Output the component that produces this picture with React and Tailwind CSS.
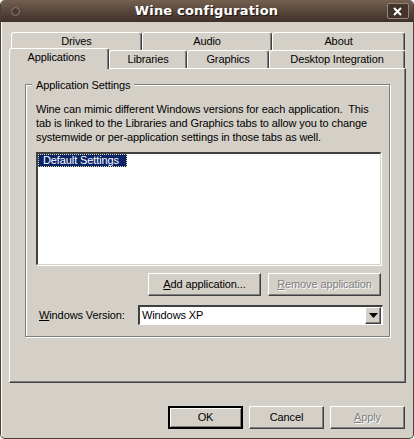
// Wine configuration dialog, Applications tab
const font = "font-['Liberation_Sans',sans-serif] text-[11px] tracking-[-0.11px] text-black";

function Tab({ label, className, selected }) {
  return (
    <div
      className={`flex items-center justify-center rounded-t-[3px] border-t border-l border-r border-t-white border-l-white border-r-[#404040] shadow-[inset_-1px_0_0_#808080] ${
        selected ? "relative z-10 h-[21px] -mt-[2px] -mb-[1px] pb-[3px] bg-[#d4d0c8]" : "h-[18px]"
      } ${className}`}
    >
      {label}
    </div>
  );
}

function Button({ children, className, disabled, isDefault }) {
  const bevel = isDefault
    ? "border-2 border-black shadow-[inset_1px_1px_0_#fff,inset_-1px_-1px_0_#808080]"
    : "border border-t-white border-l-white border-r-[#404040] border-b-[#404040] shadow-[inset_-1px_-1px_0_#808080]";
  return (
    <div
      className={`flex shrink-0 items-center justify-center whitespace-nowrap bg-[#d4d0c8] ${bevel} ${className} ${
        disabled ? "text-[#808080] [text-shadow:1px_1px_0_#fff]" : ""
      }`}
    >
      {children}
    </div>
  );
}

export default function App() {
  return (
    <div className={`flex h-[439px] w-[414px] flex-col overflow-hidden rounded-b-[5px] rounded-t-[5px] border-l border-r border-b border-[#4a4038] bg-[#d4d0c8] ${font}`}>
      {/* title bar */}
      <div className="flex h-[22px] shrink-0 items-center justify-between bg-gradient-to-b from-[#75604f] to-[#3f3029] pl-[10px] pr-[4px]">
        <div className="h-[9px] w-[9px] rounded-full border border-[#8a7c72] bg-[#4c3d34]"></div>
        <div className="ml-[6px] font-['DejaVu_Sans',sans-serif] text-[13px] font-bold tracking-[0.2px] text-white [text-shadow:1px_1px_1px_#1c1410]">
          Wine configuration
        </div>
        <div className="flex h-[16px] w-[22px] items-center justify-center rounded-[2px] border border-[#93857a] bg-[#42332b]">
          <svg width="9" height="9" viewBox="0 0 9 9">
            <path d="M1 1 L8 8 M8 1 L1 8" stroke="#fff" strokeWidth="2" />
          </svg>
        </div>
      </div>

      <div className="flex flex-1 flex-col border-l border-white pl-[7px] pr-[7px] pt-[10px]">
        {/* tabs */}
        <div className="flex pl-[2px] pr-[1px]">
          <Tab label="Drives" className="w-[131px]" />
          <Tab label="Audio" className="w-[130px]" />
          <Tab label="About" className="w-[133px]" />
        </div>
        <div className="flex pr-[1px]">
          <Tab label="Applications" selected className="w-[100px] pr-[5px]" />
          <Tab label="Libraries" className="w-[78px]" />
          <Tab label="Graphics" className="w-[82px]" />
          <Tab label="Desktop Integration" className="w-[136px]" />
        </div>

        {/* panel */}
        <div className="h-[315px] w-[397px] border-t border-l border-r border-b border-t-white border-l-white border-r-[#404040] border-b-[#404040] px-[15px] pt-[15px] shadow-[inset_-1px_-1px_0_#808080]">
          <div className="relative h-[253px] w-[365px] border border-[#808080] pl-[10px] pr-[8px] pt-[17px] shadow-[1px_1px_0_#fff,inset_1px_1px_0_#fff]">
            <div className="absolute -top-[7px] left-[6px] bg-[#d4d0c8] px-[4px] leading-[14px]">Application Settings</div>
            <p className="whitespace-pre leading-[14px]">
              {"Wine can mimic different Windows versions for each application.  This\ntab is linked to the Libraries and Graphics tabs to allow you to change\nsystemwide or per-application settings in those tabs as well."}
            </p>
            <div className="mt-[8px] h-[113px] w-[345px] border-t-2 border-l-2 border-r border-b border-t-[#404040] border-l-[#404040] border-r-[#d4d0c8] border-b-[#d4d0c8] bg-white shadow-[1px_1px_0_#fff]">
              <div className="flex h-[13px] w-[89px] items-center whitespace-nowrap border border-dotted border-[#e8e0a0] bg-[#0a246a] pl-[4px] text-white">
                Default Settings
              </div>
            </div>
            <div className="mt-[8px] flex justify-end gap-[7px]">
              <Button className="h-[23px] w-[113px]">
                <span><span className="underline">A</span>dd application...</span>
              </Button>
              <Button disabled className="h-[23px] w-[113px]">
                <span><span className="underline">R</span>emove application</span>
              </Button>
            </div>
            <div className="mt-[9px] flex items-center">
              <div className="w-[102px] shrink-0 pl-[3px]">
                <span className="underline">W</span>indows Version:
              </div>
              <div className="flex h-[20px] w-[245px] shrink-0 items-center justify-between border-t-2 border-l-2 border-r border-b border-t-[#404040] border-l-[#404040] border-r-white border-b-white bg-white pl-[2px] pr-[1px]">
                <span>Windows XP</span>
                <Button className="h-[17px] w-[16px]">
                  <svg width="9" height="5" viewBox="0 0 9 5">
                    <path d="M0 0 H9 L4.5 5 Z" fill="#000" />
                  </svg>
                </Button>
              </div>
            </div>
          </div>
        </div>

        {/* dialog buttons */}
        <div className="mt-[23px] flex justify-end gap-[6px] pr-[1px]">
          <Button isDefault className="h-[23px] w-[75px]">OK</Button>
          <Button className="h-[23px] w-[75px]">Cancel</Button>
          <Button disabled className="h-[23px] w-[75px]">
            <span><span className="underline">A</span>pply</span>
          </Button>
        </div>
      </div>
    </div>
  );
}
